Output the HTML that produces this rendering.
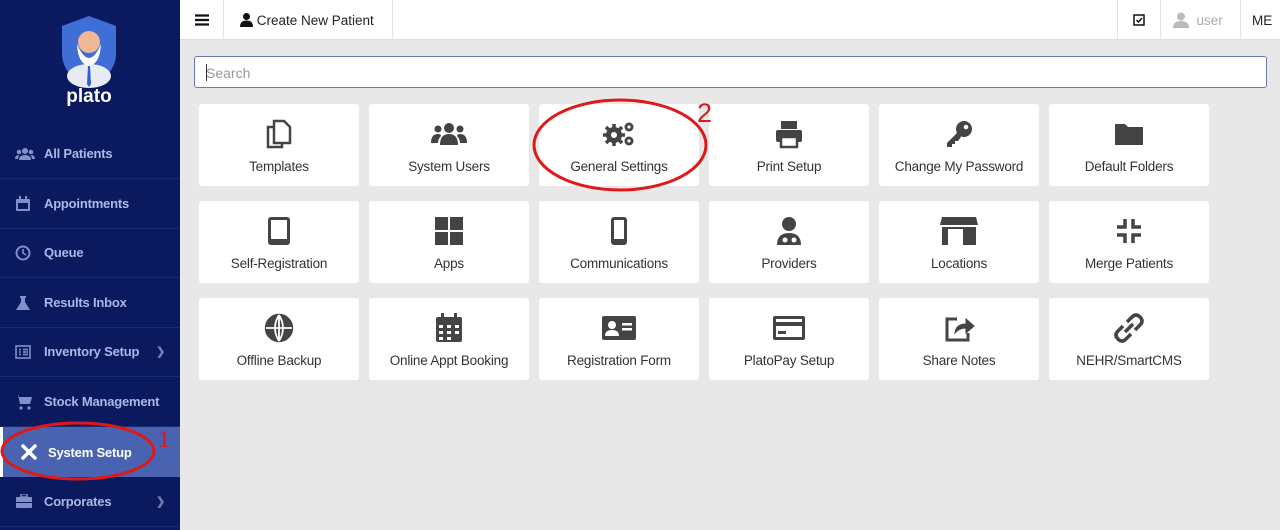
<!DOCTYPE html>
<html><head><meta charset="utf-8"><style>
*{box-sizing:border-box;margin:0;padding:0}
body{width:1280px;height:530px;overflow:hidden;background:#e8e8e8;font-family:"Liberation Sans",sans-serif;position:relative}
.sb{position:absolute;left:0;top:0;width:180px;height:530px;background:#0b1a5e}
.nav{position:absolute;left:0;width:180px;height:50px;border-bottom:1px solid #1a2a6e;color:#aab8e8;font-size:13px;font-weight:bold;display:flex;align-items:center;letter-spacing:-0.2px}
.nav svg{position:absolute;left:15px}
.nav span{position:absolute;left:44px}
.nav .ch{position:absolute;left:156px;color:#7080b0;font-size:11px}
.top{position:absolute;left:180px;top:0;right:0;height:40px;background:#fff;border-bottom:1px solid #ddd;font-size:13.5px;color:#222}
.top div{position:absolute;top:0;height:40px;display:flex;align-items:center;border-right:1px solid #e4e4e4}
.search{position:absolute;left:194px;top:56px;width:1073px;height:32px;background:#fff;border:1px solid #6a7ab0;border-radius:3px;font-size:14px;color:#999;padding:8px 11px}
.search:before{content:"";position:absolute;left:11px;top:7px;width:1px;height:17px;background:#333}
.t{position:absolute;width:160px;height:82px;background:#fff;border-radius:3px;text-align:center;color:#333;font-size:13.5px;letter-spacing:-0.2px}
.t svg{position:absolute;left:65px;top:15px}
.t span{position:absolute;left:0;right:0;top:55px}
</style></head><body>
<div class="sb">
<svg style="position:absolute;left:58px;top:14px" width="62" height="94" viewBox="0 0 62 94">
<path d="M31 2 L58 12 L58 42 Q56 62 31 74 Q6 62 4 42 L4 12 Z" fill="#3f6fd6"/>
<ellipse cx="31" cy="62" rx="22" ry="12" fill="#e8ecf2"/>
<circle cx="31" cy="28" r="11" fill="#f0b894"/>
<path d="M19 30 Q31 58 43 30 Q42 50 31 52 Q20 50 19 30Z" fill="#fff"/>
<path d="M30 52 L32 52 L33 70 L31 73 L29 70Z" fill="#2f5fd0"/>
<text x="31" y="88" text-anchor="middle" font-family="Liberation Sans" font-weight="bold" font-size="19" fill="#fff">plato</text>
</svg>
<div class="nav" style="top:129px"><svg width="20" height="14" viewBox="0 0 20 14" fill="#8090c8"><circle cx="10" cy="4" r="3"/><circle cx="4" cy="5" r="2.3"/><circle cx="16" cy="5" r="2.3"/><path d="M4 13 Q4 8 10 8 Q16 8 16 13Z M0 12 Q0 8 4 8 L3 12Z M20 12 Q20 8 16 8 L17 12Z"/></svg><span>All Patients</span></div>
<div class="nav" style="top:179px"><svg width="16" height="16" viewBox="0 0 16 16" fill="#8090c8"><rect x="1" y="3" width="14" height="12" rx="1"/><rect x="3" y="7" width="10" height="6" fill="#0b1a5e"/><rect x="4" y="0" width="2" height="4"/><rect x="10" y="0" width="2" height="4"/></svg><span>Appointments</span></div>
<div class="nav" style="top:228px"><svg width="16" height="16" viewBox="0 0 16 16"><circle cx="8" cy="8" r="6.5" fill="none" stroke="#8090c8" stroke-width="2"/><path d="M8 4 V8 L11 10" stroke="#8090c8" stroke-width="1.6" fill="none"/></svg><span>Queue</span></div>
<div class="nav" style="top:278px"><svg width="16" height="16" viewBox="0 0 16 16" fill="#8090c8"><path d="M5 1 H11 V3 H10 V7 L15 15 H1 L6 7 V3 H5Z"/></svg><span>Results Inbox</span></div>
<div class="nav" style="top:327px"><svg width="16" height="14" viewBox="0 0 16 14"><rect x="1" y="1" width="14" height="12" fill="none" stroke="#8090c8" stroke-width="1.6"/><path d="M4 4.5H6M8 4.5H13M4 7H6M8 7H13M4 9.5H6M8 9.5H13" stroke="#8090c8" stroke-width="1.4"/></svg><span>Inventory Setup</span><b class="ch">❯</b></div>
<div class="nav" style="top:377px"><svg width="18" height="16" viewBox="0 0 18 16" fill="#8090c8"><path d="M0 1 H3 L5 10 H15 L17 3 H4 L3.5 1Z"/><circle cx="6" cy="14" r="1.6"/><circle cx="14" cy="14" r="1.6"/></svg><span>Stock Management</span></div>
<div class="nav" style="top:427px;background:#4a63b0;border:none;color:#fff"><div style="position:absolute;left:0;top:0;width:3px;height:50px;background:#fff"></div><svg width="18" height="18" viewBox="0 0 18 18" style="left:20px"><path d="M3 3 L15 15 M15 3 L3 15" stroke="#fff" stroke-width="3.5" stroke-linecap="round"/></svg><span style="left:48px">System Setup</span></div>
<div class="nav" style="top:477px"><svg width="18" height="15" viewBox="0 0 18 15" fill="#8090c8"><rect x="1" y="3" width="16" height="11" rx="1"/><rect x="6" y="0" width="6" height="3" fill="none" stroke="#8090c8" stroke-width="1.4"/><rect x="1" y="8" width="16" height="1" fill="#0b1a5e"/></svg><span>Corporates</span><b class="ch">❯</b></div>
<svg style="position:absolute;left:0;top:420px" width="180" height="66"><ellipse cx="78" cy="31" rx="76" ry="28" fill="none" stroke="#e01818" stroke-width="3"/><text x="158" y="27" font-family="Liberation Serif" font-size="24" fill="#e01818">1</text></svg>
</div>
<div class="top">
<div style="left:0;width:44px;justify-content:center"><svg width="14" height="12"><path d="M0 1.5H14M0 6H14M0 10.5H14" stroke="#111" stroke-width="2.2"/></svg></div>
<div style="left:44px;width:169px;padding-left:16px"><svg width="13" height="14" viewBox="0 0 13 14" fill="#111"><circle cx="6.5" cy="3.5" r="3.5"/><path d="M0 14 Q0 7.5 6.5 7.5 Q13 7.5 13 14Z"/></svg>&nbsp;Create New Patient</div>
<div style="left:937px;width:44px;border-left:1px solid #e4e4e4;justify-content:center"><svg width="12" height="12"><rect x="1" y="1" width="10" height="10" fill="none" stroke="#111" stroke-width="1.5"/><path d="M3.5 6 L5.5 8 L9 4" stroke="#111" stroke-width="1.5" fill="none"/></svg></div>
<div style="left:981px;width:80px;padding-left:12px;color:#aaa"><svg width="16" height="16" viewBox="0 0 16 16" fill="#bbb"><circle cx="8" cy="4.5" r="4"/><path d="M0 16 Q0 9 8 9 Q16 9 16 16Z"/></svg>&nbsp;&nbsp;user</div>
<div style="left:1061px;width:40px;border:none;padding-left:11px">ME</div>
</div>
<div class="search">Search</div>

<div class="t" style="left:199px;top:104px"><svg width="30" height="30" viewBox="0 0 30 30" fill="none" stroke="#444" stroke-width="2.5"><path d="M10 8 H4 V28 H18 V24"/><path d="M10 2 H20 L26 8 V24 H10Z"/></svg><span>Templates</span></div>
<div class="t" style="left:369px;top:104px"><svg width="38" height="30" viewBox="0 0 38 30" fill="#444" style="left:61px"><circle cx="19" cy="9" r="5"/><circle cx="8" cy="10" r="3.5"/><circle cx="30" cy="10" r="3.5"/><path d="M10 26 Q10 15 19 15 Q28 15 28 26Z M1 24 Q1 15 8 15 Q11 15 11 17 Q8 20 8 24Z M37 24 Q37 15 30 15 Q27 15 27 17 Q30 20 30 24Z"/></svg><span>System Users</span></div>
<div class="t" style="left:539px;top:104px"><svg width="40" height="30" viewBox="0 0 40 30" style="left:60px" fill="#444"><circle cx="15" cy="16" r="8"/><g stroke="#444" stroke-width="3.5"><path d="M15 5V27M4 16H26M7 8L23 24M23 8L7 24"/></g><circle cx="15" cy="16" r="3" fill="#fff"/><circle cx="30" cy="8" r="4.5"/><circle cx="30" cy="8" r="1.6" fill="#fff"/><circle cx="30" cy="22" r="4.5"/><circle cx="30" cy="22" r="1.6" fill="#fff"/></svg><span>General Settings</span></div>
<div class="t" style="left:709px;top:104px"><svg width="30" height="30" viewBox="0 0 30 30" fill="#444"><rect x="7" y="2" width="16" height="8"/><rect x="2" y="11" width="26" height="12" rx="2"/><rect x="7" y="18" width="16" height="10" fill="#fff" stroke="#444" stroke-width="2.5"/></svg><span>Print Setup</span></div>
<div class="t" style="left:879px;top:104px"><svg width="30" height="30" viewBox="0 0 30 30" fill="#444"><circle cx="20" cy="10" r="8"/><circle cx="22" cy="8" r="2.3" fill="#fff"/><path d="M14 13 L3 24 V28 H8 V25 H11 V22 H14 L17 18Z"/></svg><span>Change My Password</span></div>
<div class="t" style="left:1049px;top:104px"><svg width="30" height="30" viewBox="0 0 30 30" fill="#444"><path d="M1 5 H11 L14 8 H29 V26 H1Z"/></svg><span>Default Folders</span></div>

<div class="t" style="left:199px;top:201px"><svg width="30" height="30" viewBox="0 0 30 30"><rect x="4" y="1" width="22" height="28" rx="3" fill="#444"/><rect x="7" y="4" width="16" height="19" fill="#fff"/></svg><span>Self-Registration</span></div>
<div class="t" style="left:369px;top:201px"><svg width="30" height="30" viewBox="0 0 30 30" fill="#444"><rect x="1" y="1" width="13" height="13"/><rect x="16" y="1" width="13" height="13"/><rect x="1" y="16" width="13" height="13"/><rect x="16" y="16" width="13" height="13"/></svg><span>Apps</span></div>
<div class="t" style="left:539px;top:201px"><svg width="30" height="30" viewBox="0 0 30 30"><rect x="7" y="1" width="16" height="28" rx="3" fill="#444"/><rect x="10" y="4" width="10" height="19" fill="#fff"/></svg><span>Communications</span></div>
<div class="t" style="left:709px;top:201px"><svg width="30" height="30" viewBox="0 0 30 30" fill="#444"><circle cx="15" cy="8" r="7"/><path d="M3 29 Q3 17 15 17 Q27 17 27 29Z"/><circle cx="11" cy="24" r="2.5" fill="#fff"/><circle cx="20" cy="24" r="2.5" fill="#fff"/></svg><span>Providers</span></div>
<div class="t" style="left:879px;top:201px"><svg width="40" height="30" viewBox="0 0 40 30" style="left:60px" fill="#444"><path d="M3 1 H37 L39 9 H1Z"/><rect x="3" y="11" width="34" height="18"/><rect x="9" y="13" width="15" height="16" fill="#fff"/></svg><span>Locations</span></div>
<div class="t" style="left:1049px;top:201px"><svg width="30" height="30" viewBox="0 0 30 30" fill="none" stroke="#444" stroke-width="3.5"><path d="M11 3V11H3M19 3V11H27M11 27V19H3M19 27V19H27"/></svg><span>Merge Patients</span></div>

<div class="t" style="left:199px;top:298px"><svg width="30" height="30" viewBox="0 0 30 30" fill="none" stroke="#444" stroke-width="2.4"><circle cx="15" cy="15" r="13" fill="#444"/><path d="M2 15H28M15 2V28M15 2Q7 15 15 28M15 2Q23 15 15 28" stroke="#fff" stroke-width="1.8"/></svg><span>Offline Backup</span></div>
<div class="t" style="left:369px;top:298px"><svg width="30" height="30" viewBox="0 0 30 30" fill="#444"><rect x="2" y="4" width="26" height="25" rx="2"/><rect x="7" y="0" width="3" height="6"/><rect x="20" y="0" width="3" height="6"/><g fill="#fff"><rect x="5" y="12" width="4" height="3"/><rect x="13" y="12" width="4" height="3"/><rect x="21" y="12" width="4" height="3"/><rect x="5" y="18" width="4" height="3"/><rect x="13" y="18" width="4" height="3"/><rect x="21" y="18" width="4" height="3"/><rect x="5" y="24" width="4" height="3"/><rect x="13" y="24" width="4" height="3"/></g></svg><span>Online Appt Booking</span></div>
<div class="t" style="left:539px;top:298px"><svg width="36" height="30" viewBox="0 0 36 30" style="left:62px" fill="#444"><rect x="1" y="3" width="34" height="24" rx="2"/><circle cx="11" cy="12" r="4" fill="#fff"/><path d="M4 23 Q4 17 11 17 Q18 17 18 23Z" fill="#fff"/><rect x="21" y="10" width="10" height="2.5" fill="#fff"/><rect x="21" y="15" width="10" height="2.5" fill="#fff"/></svg><span>Registration Form</span></div>
<div class="t" style="left:709px;top:298px"><svg width="34" height="30" viewBox="0 0 34 30" style="left:63px" fill="#444"><rect x="1" y="3" width="32" height="24" rx="2"/><rect x="4" y="6" width="26" height="3" fill="#fff"/><rect x="4" y="13" width="26" height="11" fill="#fff"/><rect x="6" y="18" width="8" height="3"/></svg><span>PlatoPay Setup</span></div>
<div class="t" style="left:879px;top:298px"><svg width="32" height="30" viewBox="0 0 32 30" fill="none" stroke="#444" stroke-width="3"><path d="M13 6H3V27H24V20"/><path d="M11 20 Q12 11 22 11 V6 L30 13 L22 20 V15 Q15 15 11 20Z" fill="#444" stroke-width="1"/></svg><span>Share Notes</span></div>
<div class="t" style="left:1049px;top:298px"><svg width="30" height="30" viewBox="0 0 30 30" fill="none" stroke="#444" stroke-width="3.5"><path d="M13 9 L18 4 Q22 0 26 4 Q30 8 26 12 L21 17"/><path d="M17 21 L12 26 Q8 30 4 26 Q0 22 4 18 L9 13"/><path d="M11 19 L19 11"/></svg><span>NEHR/SmartCMS</span></div>

<svg style="position:absolute;left:530px;top:95px" width="190" height="100"><ellipse cx="90" cy="50" rx="86" ry="45" fill="none" stroke="#e01818" stroke-width="3"/><text x="167" y="27" font-family="Liberation Sans" font-size="27" fill="#e01818">2</text></svg>
</body></html>
